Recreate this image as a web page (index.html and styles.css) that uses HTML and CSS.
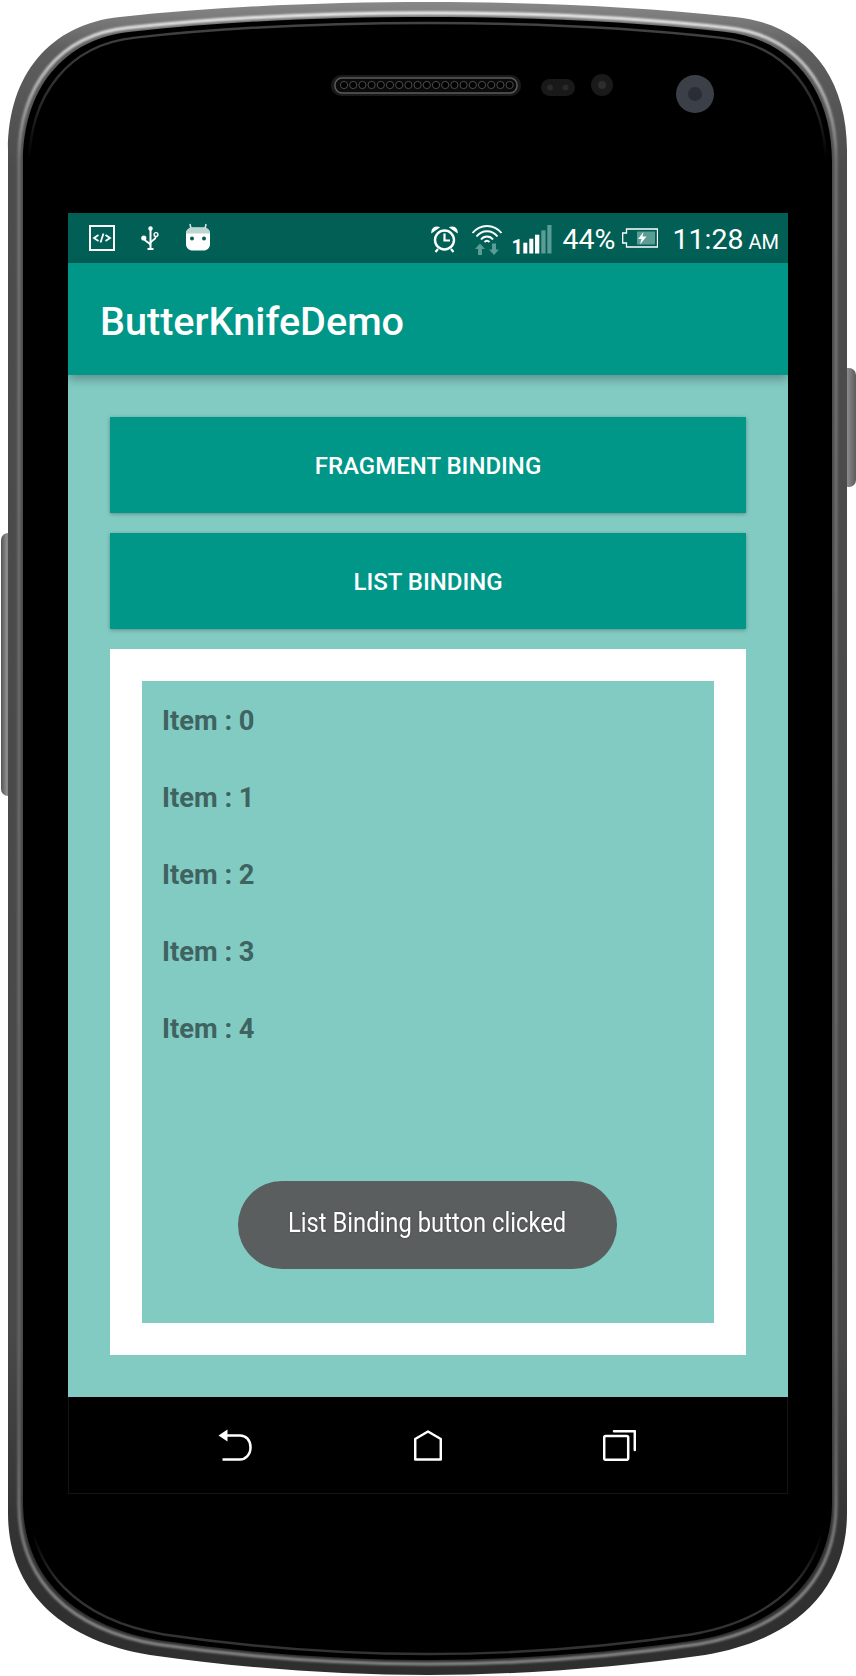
FILE: index.html
```html
<!DOCTYPE html>
<html lang="en">
  <head>
    <meta charset="utf-8">
    <title>ButterKnifeDemo</title>
    <link rel="stylesheet" href="styles.css">
  </head>
  <body>
    <div class="phone">
      <!-- handset body, drawn under the screen -->
      <svg class="phone-frame" width="856" height="1676" viewBox="0 0 856 1676">
        <defs>
          <path id="shell" d="M120 17C220 6 330 2 428 2C526 2 636 6 735 17C805 24 847 75 847 150L847 1513C847 1590 795 1640 705 1655C615 1668 516 1675 428 1675C340 1675 240 1668 150 1655C60 1640 8 1590 8 1513L8 150C8 75 50 24 120 17Z"/>
          <linearGradient id="rim" gradientUnits="userSpaceOnUse" x1="0" y1="0" x2="0" y2="1676">
            <stop offset="0" stop-color="#8a8a8a"/>
            <stop offset="0.03" stop-color="#5e5e5e"/>
            <stop offset="0.1" stop-color="#4c4c4c"/>
            <stop offset="0.8" stop-color="#484848"/>
            <stop offset="0.92" stop-color="#323232"/>
            <stop offset="1" stop-color="#2e2e2e"/>
          </linearGradient>
          <linearGradient id="glint" gradientUnits="userSpaceOnUse" x1="0" y1="0" x2="0" y2="1676">
            <stop offset="0" stop-color="#f6f6f6"/>
            <stop offset="0.04" stop-color="#c4c4c4"/>
            <stop offset="0.09" stop-color="#777"/>
            <stop offset="0.85" stop-color="#666"/>
            <stop offset="0.95" stop-color="#8c8c8c"/>
            <stop offset="1" stop-color="#8c8c8c"/>
          </linearGradient>
          <linearGradient id="seam" gradientUnits="userSpaceOnUse" x1="0" y1="0" x2="0" y2="1676">
            <stop offset="0" stop-color="#444"/>
            <stop offset="0.05" stop-color="#2a2a2a"/>
            <stop offset="0.085" stop-color="#000"/>
            <stop offset="0.925" stop-color="#000"/>
            <stop offset="0.96" stop-color="#333"/>
            <stop offset="1" stop-color="#333"/>
          </linearGradient>
          <linearGradient id="key" x1="0" y1="0" x2="1" y2="0">
            <stop offset="0" stop-color="#555"/>
            <stop offset="0.4" stop-color="#8c8c8c"/>
            <stop offset="1" stop-color="#5c5c5c"/>
          </linearGradient>
          <filter id="soft"><feGaussianBlur stdDeviation="1"/></filter>
        </defs>

        <rect x="1" y="533" width="14" height="263" rx="7" fill="url(#key)"/>
        <rect x="841" y="368" width="15" height="119" rx="7" fill="url(#key)"/>

        <use href="#shell" fill="url(#rim)"/>
        <use href="#shell" transform="translate(11.2 11.03) scale(.9738 .98685)" fill="none" stroke="url(#glint)" stroke-width="3" filter="url(#soft)"/>
        <use href="#shell" transform="translate(15.3 15.03) scale(.96424 .98207)" fill="#000"/>
        <use href="#shell" transform="translate(21.4 21.06) scale(.94994 .9749)" fill="none" stroke="url(#seam)" stroke-width="2.500"/>

        <!-- earpiece -->
        <rect x="331" y="75" width="190" height="21" rx="10" fill="#191919"/>
        <rect x="335" y="78" width="182" height="15" rx="7" fill="#0a0a0a" stroke="#5c5c5c" stroke-width="1.500"/>
        <g fill="#000" stroke="#4c4c4c" stroke-width="1">
          <circle cx="344" cy="85" r="3.600"/><circle cx="353.200" cy="85" r="3.600"/><circle cx="362.400" cy="85" r="3.600"/>
          <circle cx="371.600" cy="85" r="3.600"/><circle cx="380.800" cy="85" r="3.600"/><circle cx="390" cy="85" r="3.600"/>
          <circle cx="399.200" cy="85" r="3.600"/><circle cx="408.400" cy="85" r="3.600"/><circle cx="417.600" cy="85" r="3.600"/>
          <circle cx="426.800" cy="85" r="3.600"/><circle cx="436" cy="85" r="3.600"/><circle cx="445.200" cy="85" r="3.600"/>
          <circle cx="454.400" cy="85" r="3.600"/><circle cx="463.600" cy="85" r="3.600"/><circle cx="472.800" cy="85" r="3.600"/>
          <circle cx="482" cy="85" r="3.600"/><circle cx="491.200" cy="85" r="3.600"/><circle cx="500.400" cy="85" r="3.600"/>
          <circle cx="509.600" cy="85" r="3.600"/>
        </g>

        <!-- sensors and camera -->
        <rect x="541" y="79" width="34" height="17" rx="8.500" fill="#191919"/>
        <circle cx="550" cy="87.500" r="3" fill="#2a2a2a"/>
        <circle cx="565.500" cy="87.500" r="3" fill="#2a2a2a"/>
        <circle cx="602" cy="85" r="11" fill="#1a1a1a"/>
        <circle cx="602" cy="85" r="4" fill="#2d2d2d"/>
        <circle cx="695" cy="94" r="19" fill="#3b3f47"/>
        <circle cx="695" cy="94" r="7" fill="#2a2d33"/>
      </svg>

      <div class="screen">
        <div class="status-bar">
          <div class="status-group">
            <svg class="icon-dev" width="26" height="26" viewBox="0 0 26 26" fill="none" stroke="#fff">
              <rect x="1" y="1" width="24" height="24" stroke-width="2"/>
              <path d="M9.500 10L5 13L9.500 16M16.500 10L21 13L16.500 16M14.500 8.500L11.500 17.500" stroke-width="1.800"/>
            </svg>
            <svg class="icon-usb" width="18" height="24" viewBox="0 0 18 24" fill="none" stroke="#fff">
              <path d="M9.500 2V23M6.500 23H12.500" stroke-width="2"/>
              <path d="M3 12C3 16 9 16 9.500 19M15 10C15 14 10 14 9.500 17" stroke-width="1.800"/>
              <circle cx="9.500" cy="2.500" r="2.200" fill="#fff" stroke="none"/>
              <circle cx="2.800" cy="12" r="2.600" fill="#fff" stroke="none"/>
              <circle cx="15" cy="8.500" r="1.900" stroke-width="1.400"/>
            </svg>
            <svg class="icon-bot" width="24" height="28" viewBox="0 0 24 28">
              <path d="M5 6L4 1M19 6L20 1" stroke="#cfe0dc" stroke-width="1.600"/>
              <path d="M0 10.500C0 7 3 4.500 6.500 4.500H17.500C21 4.500 24 7 24 10.500V21C24 25 21 27.500 17.500 27.500H6.500C3 27.500 0 25 0 21Z" fill="#fff"/>
              <path d="M0 10.500C0 7 3 4.500 6.500 4.500H17.500C21 4.500 24 7 24 10.500Z" fill="#bcd6d1"/>
              <circle cx="6" cy="15.500" r="2" fill="#015f55"/>
              <circle cx="18" cy="15.500" r="2" fill="#015f55"/>
            </svg>
          </div>
          <div class="status-group status-right">
            <svg class="icon-alarm" width="27" height="28" viewBox="0 0 27 28" fill="none" stroke="#fff">
              <circle cx="13.500" cy="15" r="9.500" stroke-width="2.400"/>
              <path d="M13.500 8.500V15.500H19" stroke-width="2.200"/>
              <path d="M7 24L4.500 27M20 24L22.500 27" stroke-width="2.200"/>
              <path d="M1 7C1 3.500 4 1.500 7.500 2.500ZM26 7C26 3.500 23 1.500 19.500 2.500Z" fill="#fff" stroke="#fff" stroke-width="1.500"/>
            </svg>
            <svg class="icon-wifi" width="32" height="31" viewBox="0 0 32 31" fill="none" stroke="#fff" stroke-width="2">
              <path d="M1.500 9C9 -0.500 23 -0.500 30.500 9"/>
              <path d="M5.500 12.500C11 5.500 21 5.500 26.500 12.500"/>
              <path d="M10 15.500C13 11.500 19 11.500 22 15.500"/>
              <path d="M13.500 18C15 16.500 17 16.500 18.500 18" stroke-width="1.800"/>
              <path d="M9 19.500L4 25H7V31H11V25H14ZM23 31L28 25.500H25V19.500H21V25.500H18Z" fill="#5b9c94" stroke="none"/>
            </svg>
            <svg class="icon-signal" width="41" height="35" viewBox="-2 0 41 35">
              <text class="signal-sim" x="-1.500" y="28.500">1</text>
              <rect x="10.300" y="17.700" width="4" height="10.800" fill="#fff"/>
              <rect x="16.300" y="13.700" width="4" height="14.800" fill="#fff"/>
              <rect x="22" y="9.700" width="4.300" height="18.800" fill="#fff"/>
              <rect x="28.300" y="5.300" width="4.300" height="23.200" fill="#5b9c94"/>
              <rect x="34.300" y="0" width="4.200" height="28.500" fill="#5b9c94"/>
            </svg>
            <span class="battery-level">44%</span>
            <svg class="icon-battery" width="36" height="20" viewBox="0 0 36 20">
              <path d="M4.500 1H35.500V19H4.500V15H.7V5H4.500Z" fill="none" stroke="#fff" stroke-width="1.300"/>
              <rect x="15" y="3.500" width="18" height="13" fill="#5b9c94"/>
              <path d="M21.500 4L16 11H19.500L18 16.500L24.500 8.500H20.500Z" fill="#fff"/>
            </svg>
            <span class="clock">11:28<span class="clock-ampm">AM</span></span>
          </div>
        </div>

        <div class="app-bar">ButterKnifeDemo</div>

        <div class="content">
          <button class="action-button">FRAGMENT BINDING</button>
          <button class="action-button">LIST BINDING</button>
          <div class="list-card">
            <div class="list-body">
              <div class="list-item">Item : 0</div>
              <div class="list-item">Item : 1</div>
              <div class="list-item">Item : 2</div>
              <div class="list-item">Item : 3</div>
              <div class="list-item">Item : 4</div>
              <div class="toast"><span class="toast-text">List Binding button clicked</span></div>
            </div>
          </div>
        </div>

        <div class="nav-bar">
          <svg width="34" height="32" viewBox="0 0 34 32" fill="none" stroke="#fff" stroke-width="2.500">
            <path d="M9 6.500H22C28 6.500 32.500 11 32.500 18.500C32.500 26 27 30.500 22 30.500H4.500"/>
            <path d="M0.500 6.500L9.500 0.500V12.500Z" fill="#fff" stroke="none"/>
          </svg>
          <svg width="28" height="31" viewBox="0 0 28 31" fill="none" stroke="#fff" stroke-width="2.500" stroke-linejoin="round">
            <path d="M14 1.500L26.800 9V29.500H1.200V9Z"/>
          </svg>
          <svg width="33" height="31" viewBox="0 0 33 31" fill="none" stroke="#fff" stroke-width="2.500" stroke-linejoin="round">
            <rect x="1.200" y="6" width="24" height="23.800" rx="1.500"/>
            <path d="M11 1.200H31.800V20" stroke-linecap="round"/>
          </svg>
        </div>
      </div>
    </div>
  </body>
</html>
```

FILE: styles.css
```css
body {
  margin: 0;
  background-color: #fff;
  font-family: "Roboto", "Liberation Sans", sans-serif;
}

.phone {
  position: relative;
  box-sizing: border-box;
  width: 856px;
  height: 1676px;
  padding: 213px 0 0 68px;
  overflow: hidden;
}
.phone-frame {
  position: absolute;
  top: 0;
  left: 0;
}

.screen {
  position: relative;
  width: 720px;
}

/* status bar */
.status-bar {
  display: flex;
  justify-content: space-between;
  align-items: center;
  height: 50px;
  padding: 2px 9px 0 21px;
  box-sizing: border-box;
  background-color: #015f55;
  color: #fff;
}
.status-group {
  display: flex;
  align-items: center;
}
.icon-dev {
  margin-top: -2px;
}
.icon-usb {
  margin-left: 26px;
  margin-top: -2px;
}
.icon-bot {
  margin-left: 27px;
  margin-top: -5px;
}
.icon-wifi {
  margin-left: 13px;
}
.icon-signal {
  margin-left: 8px;
  margin-top: 6px;
}
.signal-sim {
  font-size: 20px;
  font-weight: 700;
  fill: #fff;
}
.battery-level {
  margin-left: 11px;
  font-size: 28.5px;
}
.icon-battery {
  margin-left: 6px;
  margin-top: -2px;
}
.clock {
  margin-left: 15px;
  font-size: 28.5px;
  white-space: nowrap;
}
.clock-ampm {
  margin-left: 5px;
  font-size: 20px;
}

/* toolbar */
.app-bar {
  position: relative;
  height: 112px;
  padding-left: 32px;
  box-sizing: border-box;
  background-color: #009688;
  color: #fff;
  font-size: 39.6px;
  font-weight: 500;
  line-height: 118px;
  box-shadow: 0 4px 10px rgba(0, 0, 0, 0.3);
}

/* main content */
.content {
  display: flex;
  flex-direction: column;
  gap: 20px;
  height: 1022px;
  padding: 42px 42px 42px;
  box-sizing: border-box;
  background-color: #82cbc3;
}
.action-button {
  height: 96px;
  padding-top: 3px;
  border: 0;
  background-color: #009688;
  color: #fff;
  font-family: inherit;
  font-size: 24px;
  font-weight: 500;
  box-shadow: 0 1px 4px rgba(0, 0, 0, 0.3);
}
.list-card {
  flex: 1;
  display: flex;
  padding: 32px;
  background-color: #fff;
}
.list-body {
  position: relative;
  flex: 1;
  padding-top: 2px;
  background-color: #82cbc3;
}
.list-item {
  height: 77px;
  padding-left: 20px;
  color: #3e6360;
  font-size: 27.3px;
  font-weight: 700;
  line-height: 76px;
}

/* toast sits over the list */
.toast {
  position: absolute;
  left: 96px;
  bottom: 54px;
  display: flex;
  justify-content: center;
  align-items: center;
  box-sizing: border-box;
  width: 379px;
  height: 88px;
  padding-bottom: 4px;
  border-radius: 44px;
  background-color: #5a5e5e;
  color: #fff;
  font-size: 27px;
}
.toast-text {
  display: inline-block;
  white-space: nowrap;
  transform: scaleX(0.88);
  text-shadow: 0 0 2px rgba(0, 0, 0, 0.4);
}

/* soft keys */
.nav-bar {
  display: flex;
  justify-content: space-between;
  align-items: center;
  height: 97px;
  padding: 0 151px 0 149px;
  box-sizing: border-box;
  background-color: #000;
  border: 1px solid #141414;
  border-top: 0;
}
```
